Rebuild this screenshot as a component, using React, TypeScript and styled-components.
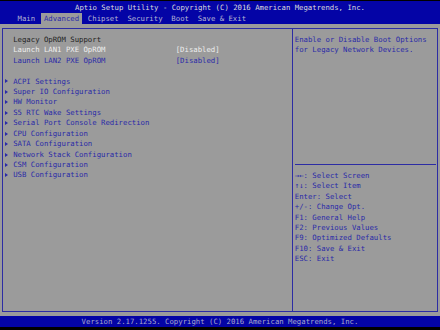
import React from "react";
import styled, { createGlobalStyle } from "styled-components";

const Global = createGlobalStyle`
  html, body { margin: 0; padding: 0; background: #000; }
  body { font-family: "DejaVu Sans Mono", "Liberation Mono", monospace; }
`;

const BLUE = "#0404a6";
const GRAY = "#9b9b9b";
const INK = "#2a2aa8";
const LINE = "#2c2ca4";

const Screen = styled.div`
  width: 440px;
  height: 330px;
  background: #000;
  display: flex;
  flex-direction: column;
  font-family: "DejaVu Sans Mono", "Liberation Mono", monospace;
  font-size: 7.3px;
  overflow: hidden;
`;

const Header = styled.div`
  margin-top: 1px;
  background: ${BLUE};
  height: 23px;
  display: flex;
  flex-direction: column;
`;

const Title = styled.div`
  height: 12px;
  line-height: 13px;
  text-align: center;
  color: #dcdcdc;
  white-space: pre;
`;

const Tabs = styled.div`
  height: 11px;
  display: flex;
  padding-left: 4ch;
  gap: 2ch;
  align-items: stretch;
`;

const Tab = styled.div<{ $active?: boolean }>`
  line-height: 11.6px;
  white-space: pre;
  color: ${(p) => (p.$active ? INK : "#b4b4d4")};
  background: ${(p) => (p.$active ? GRAY : "transparent")};
  margin: 0 ${(p) => (p.$active ? "-3.3px" : "0")};
  padding: 0 ${(p) => (p.$active ? "3.3px" : "0")};
`;

const Panel = styled.div`
  background: ${GRAY};
  height: 292px;
  padding: 4px 2px;
  box-sizing: border-box;
`;

const Box = styled.div`
  height: 284px;
  box-sizing: border-box;
  border: 1px solid ${LINE};
  display: grid;
  grid-template-columns: 289px 1px 1fr;
`;

const Divider = styled.div`
  background: ${LINE};
`;

const LeftCol = styled.div`
  padding: 5.8px 0 0 1.4px;
  display: flex;
  flex-direction: column;
`;

const Row = styled.div`
  height: 10.45px;
  line-height: 10.45px;
  display: flex;
  white-space: pre;
`;

const Marker = styled.span`
  width: 2ch;
  flex: none;
  display: flex;
  align-items: center;
`;

const Arrow = styled.span`
  width: 0;
  height: 0;
  margin-left: 0.2px;
  margin-top: -0.6px;
  border-top: 2.6px solid transparent;
  border-bottom: 2.6px solid transparent;
  border-left: 3.6px solid ${INK};
`;

const Label = styled.span<{ $tone: "dark" | "white" | "blue" }>`
  width: 37ch;
  flex: none;
  color: ${(p) =>
    p.$tone === "dark" ? "#222222" : p.$tone === "white" ? "#efefef" : INK};
`;

const Value = styled.span<{ $white?: boolean }>`
  color: ${(p) => (p.$white ? "#efefef" : INK)};
`;

const RightCol = styled.div`
  display: flex;
  flex-direction: column;
`;

const Help = styled.div`
  height: 135px;
  padding: 5.8px 0 0 1.8px;
  box-sizing: border-box;
  color: ${INK};
`;

const HelpLine = styled.div`
  height: 10.45px;
  line-height: 10.45px;
  white-space: pre;
`;

const HRule = styled.div`
  height: 1px;
  background: ${LINE};
  margin: 0 1px 0 2px;
`;

const Keys = styled.div`
  padding: 5.8px 0 0 1.8px;
  color: ${INK};
`;

const Footer = styled.div`
  background: ${BLUE};
  height: 11px;
  line-height: 12px;
  text-align: center;
  color: #a8a8cc;
  white-space: pre;
`;

type Item = { label: string; tone: "dark" | "white" | "blue"; value?: string; arrow?: boolean };

const items: Item[] = [
  { label: "Legacy OpROM Support", tone: "dark" },
  { label: "Launch LAN1 PXE OpROM", tone: "white", value: "[Disabled]" },
  { label: "Launch LAN2 PXE OpROM", tone: "blue", value: "[Disabled]" },
  { label: "", tone: "blue" },
  { label: "ACPI Settings", tone: "blue", arrow: true },
  { label: "Super IO Configuration", tone: "blue", arrow: true },
  { label: "HW Monitor", tone: "blue", arrow: true },
  { label: "S5 RTC Wake Settings", tone: "blue", arrow: true },
  { label: "Serial Port Console Redirection", tone: "blue", arrow: true },
  { label: "CPU Configuration", tone: "blue", arrow: true },
  { label: "SATA Configuration", tone: "blue", arrow: true },
  { label: "Network Stack Configuration", tone: "blue", arrow: true },
  { label: "CSM Configuration", tone: "blue", arrow: true },
  { label: "USB Configuration", tone: "blue", arrow: true },
];

const keys = [
  "→←: Select Screen",
  "↑↓: Select Item",
  "Enter: Select",
  "+/-: Change Opt.",
  "F1: General Help",
  "F2: Previous Values",
  "F9: Optimized Defaults",
  "F10: Save & Exit",
  "ESC: Exit",
];

const tabs = ["Main", "Advanced", "Chipset", "Security", "Boot", "Save & Exit"];

export default function App() {
  return (
    <Screen>
      <Global />
      <Header>
        <Title>Aptio Setup Utility - Copyright (C) 2016 American Megatrends, Inc.</Title>
        <Tabs>
          {tabs.map((t) => (
            <Tab key={t} $active={t === "Advanced"}>
              {t}
            </Tab>
          ))}
        </Tabs>
      </Header>
      <Panel>
        <Box>
          <LeftCol>
            {items.map((it, i) => (
              <Row key={i}>
                <Marker>{it.arrow ? <Arrow /> : null}</Marker>
                <Label $tone={it.tone}>{it.label}</Label>
                {it.value ? <Value $white={it.tone === "white"}>{it.value}</Value> : null}
              </Row>
            ))}
          </LeftCol>
          <Divider />
          <RightCol>
            <Help>
              <HelpLine>Enable or Disable Boot Options</HelpLine>
              <HelpLine>for Legacy Network Devices.</HelpLine>
            </Help>
            <HRule />
            <Keys>
              {keys.map((k) => (
                <HelpLine key={k}>{k}</HelpLine>
              ))}
            </Keys>
          </RightCol>
        </Box>
      </Panel>
      <Footer>Version 2.17.1255. Copyright (C) 2016 American Megatrends, Inc.</Footer>
    </Screen>
  );
}
